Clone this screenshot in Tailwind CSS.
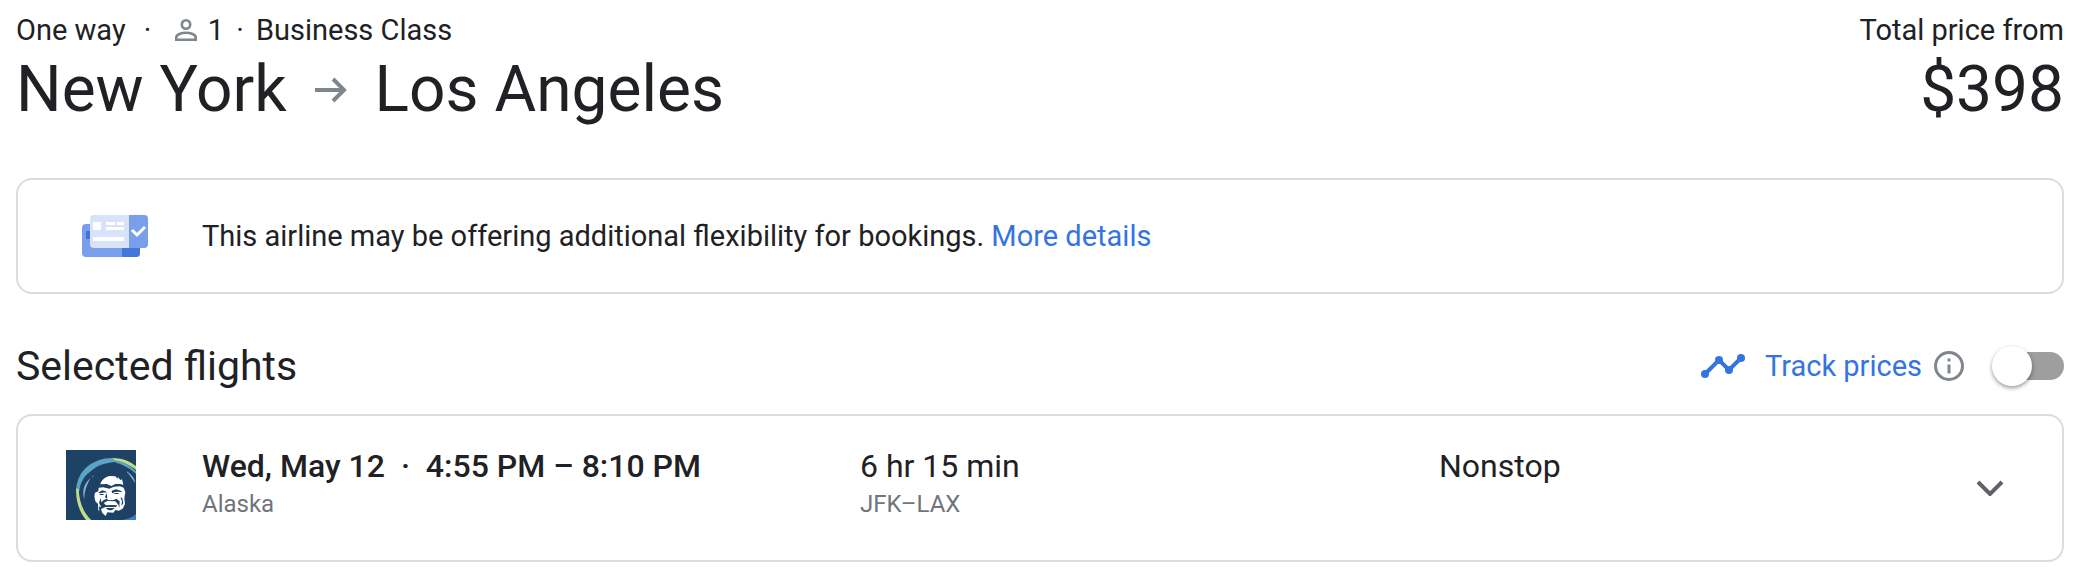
<!DOCTYPE html>
<html lang="en">
<head>
    <meta charset="UTF-8">
    <meta name="viewport" content="width=device-width, initial-scale=1.0">
    <title>New York to Los Angeles</title>
    <script src="https://cdn.jsdelivr.net/npm/@tailwindcss/browser@4"></script>
</head>
<body class="bg-white text-[#202124] font-['Roboto','Liberation_Sans',sans-serif]">
    <main class="pl-4 pr-[18px] pt-3">
        <!-- Trip summary -->
        <header class="flex justify-between">
            <div>
                <div class="flex items-center text-[29px] leading-9">
                    <span>One way</span>
                    <span class="w-11 text-center">·</span>
                    <svg class="w-6 h-6 ml-1 mr-2.5" viewBox="0 0 24 24" fill="none" stroke="#80868b" stroke-width="2.6" aria-label="Passengers">
                        <circle cx="12" cy="6.500" r="4.200" />
                        <path d="M2.300 21.700v-2.200c0-3 5-4.700 9.700-4.700s9.700 1.700 9.700 4.700v2.200z" />
                    </svg>
                    <span>1</span>
                    <span class="w-8 text-center">·</span>
                    <span>Business Class</span>
                </div>
                <h1 class="flex items-center text-[64px] leading-[84px]">
                    <span>New York</span>
                    <svg class="w-9 h-9 mx-[26px]" viewBox="0 0 36 36" fill="none" stroke="#80868b" stroke-width="4" aria-label="to">
                        <path d="M2 18h29M20 7l11 11-11 11" />
                    </svg>
                    <span>Los Angeles</span>
                </h1>
            </div>
            <div class="text-right">
                <div class="text-[29px] leading-9">Total price from</div>
                <div class="text-[64px] leading-[84px]">$398</div>
            </div>
        </header>

        <!-- Flexibility notice -->
        <section class="mt-[46px] flex items-center h-[116px] pl-16 border-2 border-[#dadce0] rounded-2xl">
            <svg class="w-[66px] h-[42px] mr-[54px]" viewBox="0 0 66 42" aria-hidden="true">
                <rect y="9" width="58" height="33" rx="4" fill="#7a9fea" />
                <path d="M40 33h18v5a4 4 0 0 1-4 4H40z" fill="#4376da" />
                <path d="M4 16h4v8H4z" fill="#4376da" />
                <rect x="8" width="58" height="33" rx="4" fill="#d8e2f8" />
                <path d="M47 0h15a4 4 0 0 1 4 4v25a4 4 0 0 1-4 4H47z" fill="#7a9fea" />
                <path d="M11 7h8v8h-8zM24 7h9v3h-9zM35 7h7v3h-7zM24 12h18v3H24zM11 22h31v4H11z" fill="#fff" />
                <path d="M50 15l5 5 8-8" fill="none" stroke="#fff" stroke-width="3" />
            </svg>
            <p class="text-[29px] leading-9">This airline may be offering additional flexibility for bookings. <a href="#" class="text-[#3474e0]">More details</a></p>
        </section>

        <!-- Selected flights heading and price tracking -->
        <div class="mt-10 flex items-center justify-between h-16">
            <h2 class="text-[41px] leading-12">Selected flights</h2>
            <div class="flex items-center">
                <svg class="w-11 h-6 mr-5" viewBox="0 0 44 24" fill="#3474e0" aria-hidden="true">
                    <path d="M4 20L18 6l10 10L40 4" fill="none" stroke="#3474e0" stroke-width="4" />
                    <circle cx="4" cy="20" r="4" />
                    <circle cx="18" cy="6" r="4" />
                    <circle cx="28" cy="16" r="4" />
                    <circle cx="40" cy="4" r="4" />
                </svg>
                <label for="track" class="text-[29px] leading-9 text-[#3474e0]">Track prices</label>
                <button class="ml-3 mr-7" aria-label="About price tracking">
                    <svg class="w-[30px] h-[30px]" viewBox="0 0 30 30" fill="#80868b">
                        <circle cx="15" cy="15" r="13.500" fill="none" stroke="#80868b" stroke-width="3" />
                        <path d="M13.500 7.500h3v3h-3zM13.500 13.500h3v9h-3z" />
                    </svg>
                </button>
                <span class="relative flex items-center w-[72px] h-10">
                    <input id="track" type="checkbox" class="peer appearance-none w-full h-7 ml-2 rounded-full bg-[#9e9e9e] checked:bg-[#8ab4f8]">
                    <span class="absolute left-0 w-10 h-10 rounded-full bg-white shadow-[0_2px_4px_rgba(0,0,0,0.4)] pointer-events-none peer-checked:left-8"></span>
                </span>
            </div>
        </div>

        <!-- Flight -->
        <section class="mt-4 flex items-start h-[148px] pt-8 pl-12 pr-[58px] border-2 border-[#dadce0] rounded-2xl">
            <svg class="w-[70px] h-[70px] mt-0.5 mr-[66px]" viewBox="0 0 210 210" role="img" aria-label="Alaska Airlines">
                <path d="M0 0h210v210H0z" fill="#1d4266" />
                <!-- parka hood -->
                <path d="M150 25C118 21 88 32 66 48C42 66 30 95 30 128L40 124C42 98 54 78 72 66C92 46 116 38 152 36z" fill="#5ba4c4" />
                <path d="M31 115C28 150 40 186 60 210H76C54 190 40 160 38 118z" fill="#bfdc88" />
                <path d="M140 25C170 22 194 36 210 48V60C190 44 170 36 146 31z" fill="#bfdc88" />
                <path d="M150 32C176 36 196 48 210 64V72C192 54 172 44 150 38z" fill="#5ba4c4" />
                <path d="M166 210C184 208 198 203 210 192V210z" fill="#3d7fb9" />
                <path d="M55 148C47 122 55 99 74 84C62 105 55 121 55 148zM78 80l5-4-2 6zM180 64C194 70 206 84 208 99C198 88 192 75 180 64z" fill="#8fb1d6" />
                <!-- face -->
                <path d="M103 103C106 90 118 80 132 78L148 79L155 87L155 80L164 91L168 87L172 105L164 102L148 102L136 108L122 102z" fill="#fff" />
                <path d="M98 113L112 112L130 116L144 110L162 109L173 113L178 126L175 145L177 162L170 176L158 182L148 180L142 188L124 187L119 198L108 188L97 181L96 162L88 154L85 139L87 128L97 124z" fill="#fff" />
                <path d="M96 128L109 121L119 124L123 128L115 127L105 130zM137 122L150 118L164 122L169 127L157 125L147 126L138 130zM101 132l14 0-4 3-10 0zM144 129l17 0-6 3-9 0zM104 144L99 159L106 172L99 169L100 184L110 193L105 177L119 171L150 171L154 166L136 165L120 166L113 159L124 153L148 154L157 164L160 174L161 154L151 146L143 150L128 151L121 146L112 151L106 157zM163 142L168 154L166 168L172 160L169 145zM121 130L117 142L124 146L123 135zM120 174L147 174L137 181L126 180z" fill="#1d4266" />
            </svg>
            <div class="w-[658px]">
                <div class="text-[32px] leading-9 font-medium">Wed, May 12 &nbsp;·&nbsp; 4:55 PM – 8:10 PM</div>
                <div class="text-2xl leading-10 text-[#70757a]">Alaska</div>
            </div>
            <div class="w-[579px]">
                <div class="text-[32px] leading-9">6 hr 15 min</div>
                <div class="text-2xl leading-10 text-[#70757a]">JFK–LAX</div>
            </div>
            <div class="flex-1 text-[32px] leading-9">Nonstop</div>
            <button class="flex items-center h-20" aria-label="Flight details">
                <svg class="w-7 h-4" viewBox="0 0 28 16" fill="none" stroke="#5f6368" stroke-width="4"><path d="M2 2l12 12L26 2" /></svg>
            </button>
        </section>
    </main>
</body>
</html>
